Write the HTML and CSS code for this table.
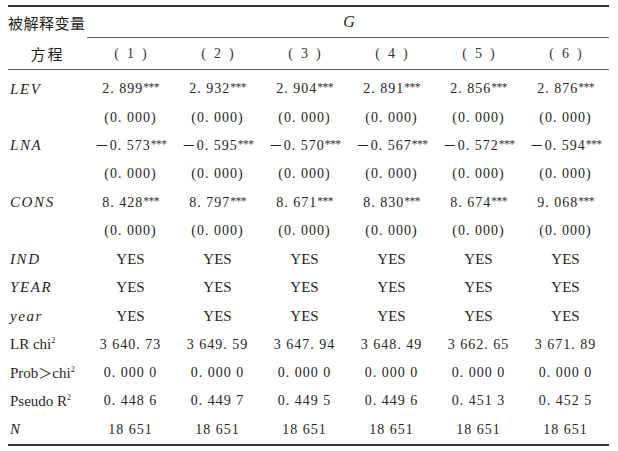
FILE: index.html
```html
<!DOCTYPE html>
<html lang="zh">
<head>
<meta charset="utf-8">
<title>回归结果</title>
<link rel="stylesheet" href="styles.css">
</head>
<body>
<table class="reg">
  <colgroup><col class="c-label"><col span="6" class="c-val"></colgroup>
  <thead>
    <tr class="h1"><th class="lab">被解释变量</th><th colspan="6" class="dep"><i>G</i></th></tr>
    <tr class="h2"><th class="lab2">方程</th><th class="eq">(1)</th><th class="eq">(2)</th><th class="eq">(3)</th><th class="eq">(4)</th><th class="eq">(5)</th><th class="eq">(6)</th></tr>
  </thead>
  <tbody>
    <tr><td class="var">LEV</td><td class="num">2. 899<sup class="sig">***</sup></td><td class="num">2. 932<sup class="sig">***</sup></td><td class="num">2. 904<sup class="sig">***</sup></td><td class="num">2. 891<sup class="sig">***</sup></td><td class="num">2. 856<sup class="sig">***</sup></td><td class="num">2. 876<sup class="sig">***</sup></td></tr>
    <tr><td class="var"></td><td class="num">(0. 000)</td><td class="num">(0. 000)</td><td class="num">(0. 000)</td><td class="num">(0. 000)</td><td class="num">(0. 000)</td><td class="num">(0. 000)</td></tr>
    <tr><td class="var">LNA</td><td class="num"><span class="minus">－</span>0. 573<sup class="sig">***</sup></td><td class="num"><span class="minus">－</span>0. 595<sup class="sig">***</sup></td><td class="num"><span class="minus">－</span>0. 570<sup class="sig">***</sup></td><td class="num"><span class="minus">－</span>0. 567<sup class="sig">***</sup></td><td class="num"><span class="minus">－</span>0. 572<sup class="sig">***</sup></td><td class="num"><span class="minus">－</span>0. 594<sup class="sig">***</sup></td></tr>
    <tr><td class="var"></td><td class="num">(0. 000)</td><td class="num">(0. 000)</td><td class="num">(0. 000)</td><td class="num">(0. 000)</td><td class="num">(0. 000)</td><td class="num">(0. 000)</td></tr>
    <tr><td class="var">CONS</td><td class="num">8. 428<sup class="sig">***</sup></td><td class="num">8. 797<sup class="sig">***</sup></td><td class="num">8. 671<sup class="sig">***</sup></td><td class="num">8. 830<sup class="sig">***</sup></td><td class="num">8. 674<sup class="sig">***</sup></td><td class="num">9. 068<sup class="sig">***</sup></td></tr>
    <tr><td class="var"></td><td class="num">(0. 000)</td><td class="num">(0. 000)</td><td class="num">(0. 000)</td><td class="num">(0. 000)</td><td class="num">(0. 000)</td><td class="num">(0. 000)</td></tr>
    <tr><td class="var">IND</td><td class="yes">YES</td><td class="yes">YES</td><td class="yes">YES</td><td class="yes">YES</td><td class="yes">YES</td><td class="yes">YES</td></tr>
    <tr><td class="var">YEAR</td><td class="yes">YES</td><td class="yes">YES</td><td class="yes">YES</td><td class="yes">YES</td><td class="yes">YES</td><td class="yes">YES</td></tr>
    <tr><td class="var">year</td><td class="yes">YES</td><td class="yes">YES</td><td class="yes">YES</td><td class="yes">YES</td><td class="yes">YES</td><td class="yes">YES</td></tr>
    <tr><td class="txt">LR chi<sup class="pw">2</sup></td><td class="num">3 640. 73</td><td class="num">3 649. 59</td><td class="num">3 647. 94</td><td class="num">3 648. 49</td><td class="num">3 662. 65</td><td class="num">3 671. 89</td></tr>
    <tr><td class="txt">Prob<span class="gt">＞</span>chi<sup class="pw">2</sup></td><td class="num">0. 000 0</td><td class="num">0. 000 0</td><td class="num">0. 000 0</td><td class="num">0. 000 0</td><td class="num">0. 000 0</td><td class="num">0. 000 0</td></tr>
    <tr><td class="txt">Pseudo R<sup class="pw">2</sup></td><td class="num">0. 448 6</td><td class="num">0. 449 7</td><td class="num">0. 449 5</td><td class="num">0. 449 6</td><td class="num">0. 451 3</td><td class="num">0. 452 5</td></tr>
    <tr><td class="var">N</td><td class="num">18 651</td><td class="num">18 651</td><td class="num">18 651</td><td class="num">18 651</td><td class="num">18 651</td><td class="num">18 651</td></tr>
  </tbody>
</table>
</body>
</html>
```
FILE: styles.css
```css
body {
  margin: 0;
  background: #ffffff;
  color: #1f1f1f;
  font-family: "Liberation Serif", "Noto Sans CJK SC", serif;
}

.reg {
  margin: 5px 0 0 8px;
  width: 601px;
  border-collapse: separate;
  border-spacing: 0;
  table-layout: fixed;
}

.c-label {
  width: 79px;
}

.reg th,
.reg td {
  box-sizing: border-box;
  padding: 0;
  text-align: center;
  vertical-align: middle;
  font-weight: normal;
  white-space: nowrap;
  line-height: 1;
}

.h1 th {
  height: 33px;
  border-top: 2px solid #333333;
}

.h1 .dep {
  border-bottom: 1px solid #5a5a5a;
  font-size: 16px;
  padding-left: 2px;
}

.h1 .lab {
  text-align: left;
  font-family: "Noto Sans CJK SC", sans-serif;
  font-size: 15px;
  letter-spacing: 0.5px;
}

.h2 th {
  height: 32px;
  border-bottom: 1px solid #5a5a5a;
  font-family: "Liberation Serif", serif;
  font-size: 14px;
  color: #333333;
}

.h2 .eq {
  letter-spacing: 8px;
  padding-left: 8px;
}

.h2 .lab2 {
  font-family: "Noto Sans CJK SC", sans-serif;
  font-size: 15px;
  letter-spacing: 2px;
  color: #1f1f1f;
}

tbody td {
  height: 28.4px;
}

tbody tr:first-child td {
  height: 33.4px;
  padding-top: 5px;
}

tbody tr:last-child td {
  height: 30.4px;
  border-bottom: 2px solid #333333;
}

.var {
  font-style: italic;
  text-align: left !important;
  padding-left: 2px !important;
  font-size: 15px;
  letter-spacing: 1.6px;
}

.txt {
  text-align: left !important;
  padding-left: 2px !important;
  font-size: 15px;
}

.num {
  font-size: 14px;
  letter-spacing: 1px;
  color: #262626;
}

.yes {
  font-size: 15px;
}

.minus {
  letter-spacing: 0;
  margin-right: 1px;
}

.gt {
  font-size: 14px;
}

.sig {
  font-size: 11.5px;
  letter-spacing: -0.5px;
  vertical-align: 2px;
  line-height: 0;
  color: #333333;
}

.pw {
  font-size: 8px;
  vertical-align: 6px;
  line-height: 0;
}
```
